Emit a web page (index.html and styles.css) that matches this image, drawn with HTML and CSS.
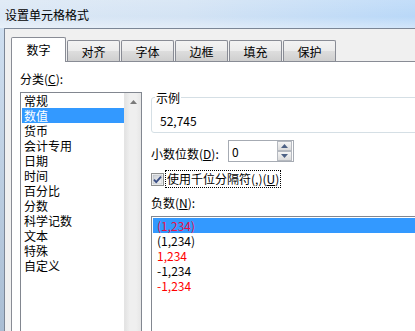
FILE: index.html
```html
<!DOCTYPE html>
<html lang="zh-CN">
<head>
<meta charset="utf-8">
<title>设置单元格格式</title>
<link rel="stylesheet" href="styles.css">
</head>
<body>
<div class="window">
  <div class="titlebar"><span class="title">设置单元格格式</span></div>
  <div class="frame">
    <div class="frame-left"></div>
    <div class="client">
      <div class="tabs">
        <div class="tab selected">数字</div>
        <div class="tab">对齐</div>
        <div class="tab">字体</div>
        <div class="tab">边框</div>
        <div class="tab">填充</div>
        <div class="tab">保护</div>
      </div>
      <div class="panel">
        <div class="col-left">
          <div class="label cat-label">分类(<u>C</u>):</div>
          <div class="listbox cat-list">
            <div class="items">
              <div class="item">常规</div>
              <div class="item selected">数值</div>
              <div class="item">货币</div>
              <div class="item">会计专用</div>
              <div class="item">日期</div>
              <div class="item">时间</div>
              <div class="item">百分比</div>
              <div class="item">分数</div>
              <div class="item">科学记数</div>
              <div class="item">文本</div>
              <div class="item">特殊</div>
              <div class="item">自定义</div>
            </div>
            <div class="scrollbar">
              <svg class="arrow-up" width="7" height="4" viewBox="0 0 7 4"><polygon points="0,4 7,4 3.5,0" fill="#7a7a7a"/></svg>
            </div>
          </div>
        </div>
        <div class="col-right">
          <div class="group">
            <span class="group-label">示例</span>
            <div class="sample">52,745</div>
          </div>
          <div class="spin-row">
            <div class="label spin-label">小数位数(<u>D</u>):</div>
            <div class="spinbox">
              <span class="spin-value">0</span>
              <div class="spin-buttons">
                <div class="spin-btn"><svg width="7" height="4" viewBox="0 0 7 4"><polygon points="0,4 7,4 3.5,0" fill="#4d6185"/></svg></div>
                <div class="spin-btn"><svg width="7" height="4" viewBox="0 0 7 4"><polygon points="0,0 7,0 3.5,4" fill="#4d6185"/></svg></div>
              </div>
            </div>
          </div>
          <div class="check-row">
            <svg class="checkbox" width="13" height="13" viewBox="0 0 13 13">
              <defs>
                <linearGradient id="cbg" x1="0" y1="0" x2="1" y2="1">
                  <stop offset="0" stop-color="#cbcfd5"/>
                  <stop offset="1" stop-color="#f6f6f6"/>
                </linearGradient>
              </defs>
              <rect x="0.5" y="0.5" width="12" height="12" fill="#ffffff" stroke="#8e8f8f"/>
              <rect x="2" y="2" width="9" height="9" fill="url(#cbg)" stroke="#b0b4ba" stroke-width="0.6"/>
              <path d="M3 6.6 L5.2 9.2 L10 3.6" fill="none" stroke="#3b4f86" stroke-width="1.8" stroke-linejoin="round"/>
            </svg>
            <span class="check-label">使用千位分隔符(,)(<u>U</u>)</span>
          </div>
          <div class="label neg-label">负数(<u>N</u>):</div>
          <div class="listbox neg-list">
            <div class="item selected red">(1,234)</div>
            <div class="item">(1,234)</div>
            <div class="item red">1,234</div>
            <div class="item">-1,234</div>
            <div class="item red">-1,234</div>
          </div>
        </div>
      </div>
    </div>
  </div>
</div>
</body>
</html>
```
FILE: styles.css
```css
* { box-sizing: border-box; }
html, body { margin: 0; padding: 0; }
body {
  font-family: "Noto Sans CJK SC", "Noto Sans", sans-serif;
  font-size: 12px;
  color: #000;
  background: #f0f0f0;
}
.window {
  width: 415px;
  height: 331px;
  overflow: hidden;
  display: flex;
  flex-direction: column;
  background: linear-gradient(to right, #dce8f5 0%, #d3e3f4 45%, #b9d8f8 100%);
}
.titlebar {
  height: 28px;
  flex: none;
  display: flex;
  align-items: center;
  padding-left: 5px;
  background: linear-gradient(to bottom, rgba(255,255,255,0.15), rgba(255,255,255,0) 60%, rgba(255,255,255,0.35) 100%);
}
.title { line-height: 15px; }
.frame {
  flex: 1;
  display: flex;
  min-height: 0;
}
.frame-left {
  width: 4px;
  flex: none;
  background: linear-gradient(to bottom, #cfdff0, #a9bdd3);
}
.client {
  flex: 1;
  min-width: 0;
  overflow: hidden;
  background: #f0f0f0;
  border-top: 1px solid #7b8696;
  border-left: 1px solid #7b8696;
  padding: 8px 0 0 6px;
  display: flex;
  flex-direction: column;
}
.tabs {
  display: flex;
  align-items: flex-end;
  height: 24px;
  flex: none;
  position: relative;
  z-index: 1;
}
.tab {
  width: 53px;
  height: 21px;
  margin-left: 1px;
  border: 1px solid #898c95;
  border-bottom: none;
  border-radius: 2px 2px 0 0;
  background: linear-gradient(to bottom, #f3f3f3 0%, #ebebeb 50%, #dddddd 51%, #cfcfcf 100%);
  display: flex;
  align-items: center;
  justify-content: center;
  line-height: 15px;
  padding-top: 1px;
}
.tab.selected {
  width: 55px;
  height: 25px;
  margin-left: 0;
  margin-bottom: -1px;
  background: #ffffff;
  padding-top: 0;
  padding-bottom: 1px;
}
.panel {
  flex: 1;
  width: 520px;
  background: #ffffff;
  border-top: 1px solid #898c95;
  border-left: 1px solid #898c95;
  padding-left: 8px;
  display: flex;
  gap: 9px;
}
.label { line-height: 15px; }
.col-left { width: 122px; flex: none; }
.cat-label { margin-top: 9px; }
.listbox {
  background: #ffffff;
  border: 1px solid #828790;
}
.cat-list {
  margin-top: 6px;
  height: 260px;
  display: flex;
  padding: 0 0 0 1px;
}
.items { flex: 1; padding-top: 0; }
.item {
  height: 15px;
  line-height: 15px;
  padding-left: 2px;
  white-space: nowrap;
}
.item.selected {
  background: #3399ff;
  color: #ffffff;
}
.scrollbar {
  width: 17px;
  flex: none;
  background: linear-gradient(to right, #e3e3e3, #efefef 30%, #efefef 70%, #e6e6e6);
  border-left: 1px solid #e4e4e4;
  display: flex;
  justify-content: center;
  padding-top: 7px;
}
.arrow-up { display: block; }
.col-right {
  width: 320px;
  flex: none;
}
.group {
  position: relative;
  margin-top: 35px;
  height: 36px;
  border: 1px solid #d5dfe5;
  border-radius: 3px;
  padding: 15px 0 0 8px;
}
.group-label {
  position: absolute;
  top: -8px;
  left: 3px;
  padding: 0 1px;
  line-height: 15px;
  background: #ffffff;
}
.sample { line-height: 15px; }
.spin-row {
  display: flex;
  margin-top: 7px;
  height: 22px;
}
.spin-label {
  width: 77px;
  margin-top: 6px;
  white-space: nowrap;
}
.spinbox {
  width: 66px;
  height: 22px;
  border: 1px solid #a6abb3;
  display: flex;
  align-items: center;
  justify-content: space-between;
  padding: 0 1px 0 3px;
}
.spin-value { line-height: 15px; }
.spin-buttons {
  width: 15px;
  height: 20px;
  display: flex;
  flex-direction: column;
}
.spin-btn {
  flex: 1;
  border: 1px solid #b5b9c0;
  background: linear-gradient(to bottom, #f5f5f5, #dcdcdc);
  display: flex;
  align-items: center;
  justify-content: center;
}
.spin-btn svg { display: block; }
.check-row {
  display: flex;
  align-items: center;
  margin-top: 8px;
  height: 18px;
}
.checkbox { display: block; flex: none; }
.check-label {
  margin-left: 1px;
  line-height: 16px;
  padding: 0 1px;
  border: 1px dotted #000000;
  white-space: nowrap;
}
.neg-label { margin-top: 7px; }
.neg-list {
  margin-top: 6px;
  height: 140px;
  padding: 1px;
}
.neg-list .item { padding-left: 4px; }
.item.red { color: #ff0000; }
.neg-list .item.selected { color: #e8104a; }
```
